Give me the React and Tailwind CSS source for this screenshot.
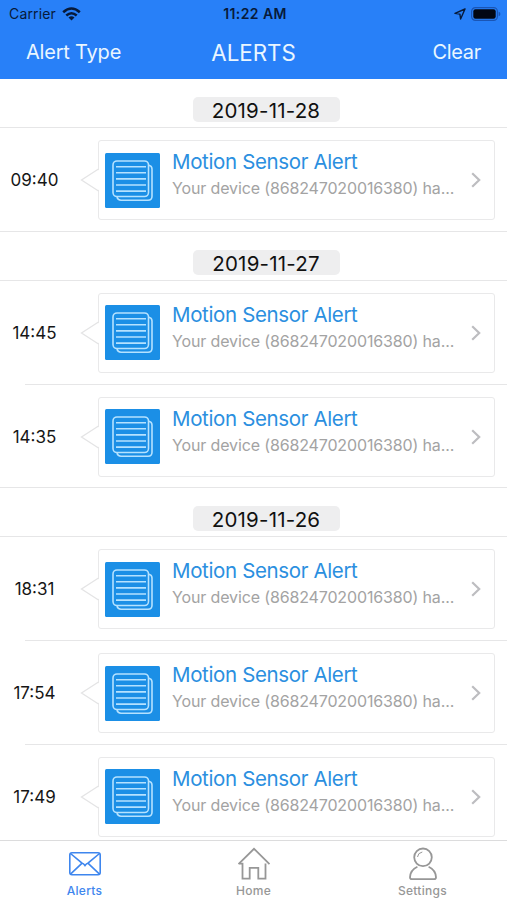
import { useState } from "react";

const sections = [
  { date: "2019-11-28", alerts: ["09:40"] },
  { date: "2019-11-27", alerts: ["14:45", "14:35"] },
  { date: "2019-11-26", alerts: ["18:31", "17:54", "17:49"] },
];

const tabs = [
  { name: "Alerts", Icon: MailIcon },
  { name: "Home", Icon: HomeIcon },
  { name: "Settings", Icon: PersonIcon },
];

function MailIcon() {
  return (
    <svg width="34" height="34" viewBox="0 0 34 34" fill="none" stroke="currentColor" strokeWidth="1.6">
      <rect x="1.8" y="5.8" width="30.4" height="22" rx="2.2" />
      <path d="M2.5 6.5l11.6 9.7q1.4.2 2.9 2.3 1.5-2.1 2.9-2.3L31.5 6.5M2.5 27.1l11.6-10.9M31.5 27.1L19.9 16.2" />
    </svg>
  );
}

function HomeIcon() {
  return (
    <svg width="34" height="34" viewBox="0 0 34 34" fill="none" stroke="currentColor" strokeWidth="1.8">
      <path d="M1.5 17.2L17 1.8l15.5 15.4" />
      <path d="M2.5 16.6h3v15.1h7.2V20.8h8.6v10.9h7.2V16.6" />
    </svg>
  );
}

function PersonIcon() {
  return (
    <svg width="34" height="34" viewBox="0 0 34 34" fill="none" stroke="currentColor" strokeWidth="1.8">
      <circle cx="17" cy="10.3" r="8.8" />
      <path d="M11.5 10q.4-4.2 4.8-5" strokeWidth="1" />
      <path d="M11.4 19.8q-7 3.2-7.4 10.4 0 1.9 1.8 1.9h22.4q1.8 0 1.8-1.9-.4-7.2-7.4-10.4" />
    </svg>
  );
}

function DocumentsIcon() {
  return (
    <svg
      className="shrink-0"
      width="55"
      height="55"
      viewBox="0 0 55 55"
      fill="none"
      stroke="#b5e2ff"
      strokeWidth="1.6"
    >
      <rect width="55" height="55" rx="1.5" fill="#1b8fe6" stroke="none" />
      <rect x="8" y="8" width="35.5" height="35.5" rx="4" />
      <path d="M44 12.2q3 .8 3 3.8v27.2q0 4-4 4H16q-3.2 0-4-3.2" />
      <path d="M11 13.7h30M11 19.8h30M11 25.9h30M11 32h30M11 38.1h30" />
    </svg>
  );
}

function StatusBar() {
  return (
    <div className="flex h-[27px] items-center justify-between pl-[9px] pr-[6px] text-[14px] text-[#071a3a]">
      <div className="flex flex-1 items-center gap-[6px]">
        <span className="tracking-[0.15px]">Carrier</span>
        <svg width="19" height="14" viewBox="0 0 19 14" fill="none" stroke="currentColor" strokeWidth="2.6">
          <path d="M1.2 5.2q8.3-7.4 16.6 0" />
          <path d="M4.3 8.5q5.2-4.5 10.4 0" />
          <path d="M9.5 13.5L6.5 10.5q3-2.3 6 0z" fill="currentColor" stroke="none" />
        </svg>
      </div>
      <span className="text-[14px] font-semibold tracking-[0.4px]">11:22 AM</span>
      <div className="flex flex-1 items-center justify-end gap-[5px]">
        <svg width="12" height="12" viewBox="0 0 12 12" fill="none" stroke="currentColor" strokeWidth="1.4">
          <path d="M11 1L1 5.4l4.9.7L6.6 11z" strokeLinejoin="round" />
        </svg>
        <svg width="30" height="14" viewBox="0 0 30 14">
          <rect x=".6" y=".6" width="25.8" height="12.8" rx="3.8" fill="none" stroke="#1a55b5" strokeWidth="1.2" />
          <rect x="2.3" y="2.3" width="22.4" height="9.4" rx="2.2" fill="#020713" />
          <path d="M27.6 4.7q1.8.6 1.8 2.3t-1.8 2.3z" fill="#1a55b5" />
        </svg>
      </div>
    </div>
  );
}

function AlertRow({ time, last }) {
  return (
    <div className="relative flex h-[103.75px] items-start pt-3 pr-3">
      <div className="w-[98px] pr-[29px] text-center text-[17px] leading-[80px] text-[#161616]">
        {time}
      </div>

      <div className="relative flex h-20 min-w-0 flex-1 items-center rounded-[3px] border-[1.5px] border-[#e9e9ea] pl-[6px]">
        {/* Pointer towards the time */}
        <svg
          className="absolute -left-[19px] top-[27px]"
          width="21"
          height="24"
          viewBox="0 0 21 24"
          fill="#fff"
        >
          <path d="M20.5 1L1.5 12l19 11z" />
          <path d="M18.5 1L1.5 12l17 11" fill="none" stroke="#e4e4e5" strokeWidth="1.3" />
        </svg>

        <DocumentsIcon />

        <div className="ml-3 w-[286px] pb-[11px]">
          <h3 className="text-[20.5px] leading-[27px] tracking-[-0.36px] whitespace-nowrap text-[#2b8fe0]">
            Motion Sensor Alert
          </h3>
          <p className="text-[16px] leading-[26px] tracking-[-0.14px] whitespace-nowrap text-[#a3a3a3]">
            Your device (868247020016380) ha...
          </p>
        </div>

        <svg
          className="ml-[13px]"
          width="10"
          height="16"
          viewBox="0 0 10 16"
          fill="none"
          stroke="#bdbdc0"
          strokeWidth="2.2"
        >
          <path d="M1.2 1.2L8.2 8l-7 6.8" />
        </svg>
      </div>

      <div
        className={`absolute bottom-0 right-0 h-px bg-[#e6e6e7] ${
          last ? "left-0" : "left-[25px]"
        }`}
      />
    </div>
  );
}

function App() {
  const [activeTab, setActiveTab] = useState("Alerts");

  return (
    <div className="flex h-[900px] w-[507px] flex-col overflow-hidden bg-white font-['Inter','Liberation_Sans',sans-serif]">
      <header className="h-[79px] shrink-0 bg-[#2880f8]">
        <StatusBar />
        <div className="grid grid-cols-3 items-center px-[26px] pt-[7px] text-[#eaf6ff]">
          <button className="text-left text-[20px] leading-[37px] tracking-[-0.2px]">Alert Type</button>
          <h1 className="text-center text-[22.3px] leading-[34px]">ALERTS</h1>
          <button className="text-right text-[20px] leading-[37px] tracking-[-0.3px]">Clear</button>
        </div>
      </header>

      <main className="min-h-0 flex-1 overflow-hidden">
        {sections.map((section) => (
          <section key={section.date}>
            <div className="flex h-[49px] items-end justify-center border-b border-[#e6e6e7] pb-[5px] pl-[25px]">
              <h2 className="h-[25px] w-[147px] rounded-[5px] bg-[#eeeeef] text-center text-[20.5px] leading-[27px] tracking-[0.2px] text-[#111]">
                {section.date}
              </h2>
            </div>
            {section.alerts.map((time, i) => (
              <AlertRow
                key={time}
                time={time}
                last={i === section.alerts.length - 1}
              />
            ))}
          </section>
        ))}
      </main>

      <nav className="grid h-[60px] shrink-0 grid-cols-3 border-t border-[#dcdcdd] bg-white">
        {tabs.map(({ name, Icon }) => (
          <button
            key={name}
            onClick={() => setActiveTab(name)}
            className={`flex flex-col items-center pt-[6px] text-[12px] font-medium leading-[20px] tracking-[0.3px] ${
              activeTab === name ? "text-[#3e86ee]" : "text-[#979797]"
            }`}
          >
            <Icon />
            {name}
          </button>
        ))}
      </nav>
    </div>
  );
}

export default App;
